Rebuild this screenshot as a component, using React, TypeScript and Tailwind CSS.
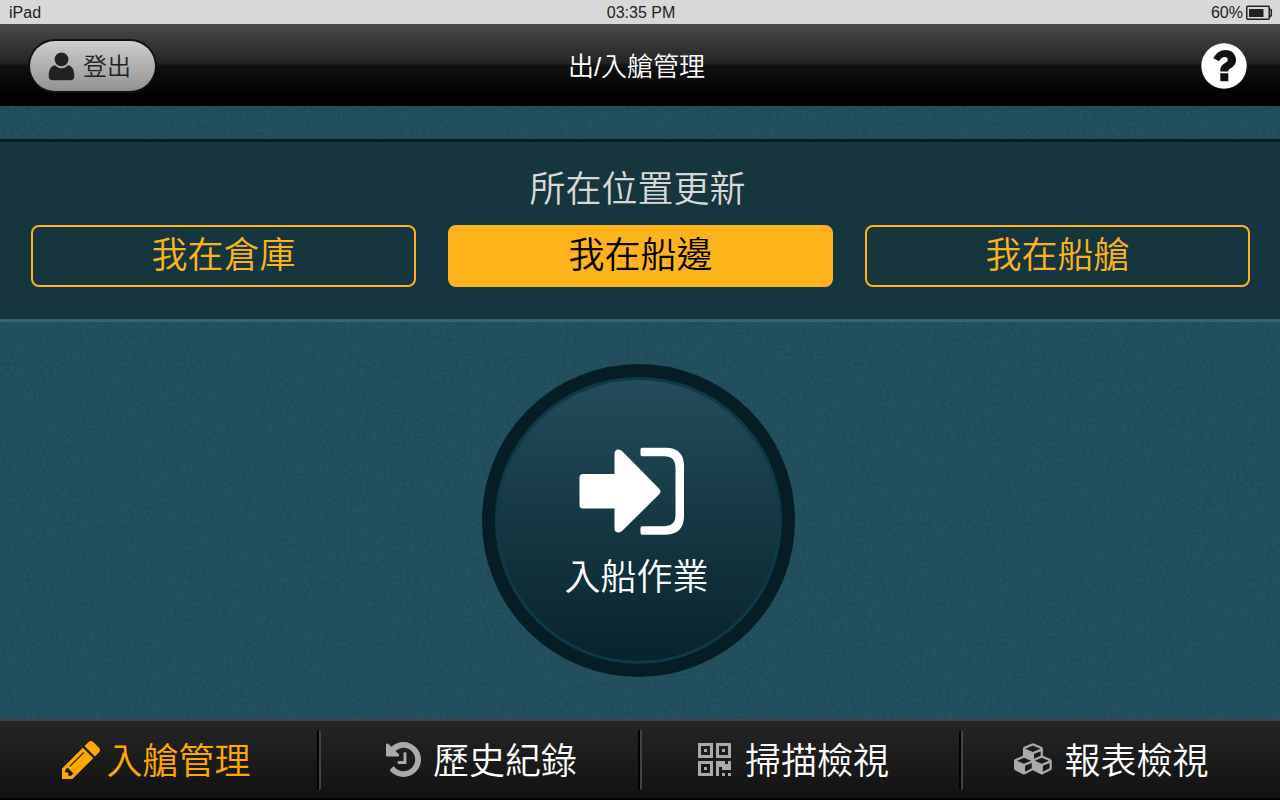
import type { ReactNode } from "react";

const icon = {
  pencil:
    "M363 1536l91-91-235-235-91 91v107h128v128h107zm523-928q0-22-22-22-10 0-17 7l-542 542q-7 7-7 17 0 22 22 22 10 0 17-7l542-542q7-7 7-17zm-54-192l416 416-832 832h-416v-416zm683 96q0 53-37 90l-166 166-416-416 166-165q36-38 90-38 53 0 91 38l235 234q37 39 37 91z",
  history:
    "M1664 896q0 156-61 298t-164 245-245 164-298 61q-172 0-327-72.5t-264-204.5q-7-10-6.5-22.5t8.5-20.5l137-138q10-9 25-9 16 2 23 12 73 95 179 147t225 52q104 0 198.5-40.5t163.5-109.5 109.5-163.5 40.5-198.5-40.5-198.5-109.5-163.5-163.5-109.5-198.5-40.5q-98 0-188 35.5t-160 101.5l137 138q31 30 14 69-17 40-59 40h-448q-26 0-45-19t-19-45v-448q0-42 40-59 39-17 69 14l130 129q107-101 244.5-156.5t284.5-55.5q156 0 298 61t245 164 164 245 61 298zm-640-288v448q0 14-9 23t-23 9h-320q-14 0-23-9t-9-23v-64q0-14 9-23t23-9h224v-352q0-14 9-23t23-9h64q14 0 23 9t9 23z",
  qrcode:
    "M576 1152v128h-128v-128h128zm0-768v128h-128v-128h128zm768 0v128h-128v-128h128zm-1024 1023h384v-383h-384v383zm0-767h384v-384h-384v384zm768 0h384v-384h-384v384zm-256 256v640h-640v-640h640zm512 512v128h-128v-128h128zm256 0v128h-128v-128h128zm0-512v384h-384v-128h-128v384h-128v-640h384v128h128v-128h128zm-768-768v640h-640v-640h640zm768 0v640h-640v-640h640z",
  cubes:
    "M640 1632l384-192v-314l-384 164v342zm-64-454l404-173-404-173-404 173zm1088 454l384-192v-314l-384 164v342zm-64-454l404-173-404-173-404 173zm-448-293l384-165v-266l-384 164v267zm-64-379l441-189-441-189-441 189zm1088 518v416q0 36-19 67t-52 47l-448 224q-25 14-57 14t-57-14l-448-224q-4-2-7-4-2 2-7 4l-448 224q-25 14-57 14t-57-14l-448-224q-33-16-52-47t-19-67v-416q0-38 21.5-70t56.5-48l434-186v-400q0-38 21.5-70t56.5-48l448-192q23-10 50-10t50 10l448 192q35 16 56.5 48t21.5 70v400l434 186q36 16 57 48t21 70z",
};

function StatusBar() {
  return (
    <div className="grid h-6 shrink-0 grid-cols-3 items-center bg-[#d8d8d8] pt-0.5 pr-[7px] pl-[9px] font-['Liberation_Sans',sans-serif] text-base leading-5 text-[#222]">
      <span>iPad</span>
      <span className="text-center">03:35 PM</span>
      <span className="flex items-center justify-end gap-0.5">
        60%
        <svg className="h-4 w-7" viewBox="0 0 28 16" aria-label="電池" role="img">
          <rect x="1.750" y="1.250" width="22.500" height="13" rx="1" fill="none" stroke="#222" strokeWidth="1.500" />
          <rect x="4" y="4" width="14.500" height="8" fill="#222" />
          <path d="M24 3.500L26.300 5.200V10.600L24 12.300" fill="none" stroke="#222" strokeWidth="1.500" />
        </svg>
      </span>
    </div>
  );
}

function Header() {
  return (
    <header className="flex h-[82px] shrink-0 items-center justify-between bg-[linear-gradient(#4a4a4a_0%,#242424_47%,#111_51%,#000_88%)] pt-0.5 pr-[33px] pl-[30px]">
      <button
        type="button"
        className="flex h-[50px] w-[125px] items-center justify-center gap-2 rounded-full bg-linear-to-b from-[#cdcdcd] to-[#939393] pr-1.5 text-2xl text-[#222] shadow-[0_0_0_2px_#111]"
      >
        <svg className="h-[30px] w-[27px]" viewBox="0 0 27 30" fill="#222" aria-hidden="true">
          <circle cx="13.500" cy="8.300" r="6.900" />
          <path d="M6.800 14.200Q13.500 20.500 20.200 14.200C24.500 14.800 26.300 19.500 26.300 25.200Q26.300 29.300 22.200 29.300H4.800Q.7 29.300.7 25.200C.7 19.500 2.500 14.800 6.800 14.200Z" />
        </svg>
        <span className="pt-0.5">登出</span>
      </button>
      <h1 className="pt-0.5 pr-1 text-[26px] leading-9 text-white">出/入艙管理</h1>
      <div className="flex w-[125px] justify-end">
        <button type="button" aria-label="說明" className="rounded-full">
          <svg className="size-[46px]" viewBox="0 0 46 46" aria-hidden="true">
            <circle cx="23" cy="23" r="22.700" fill="#fff" />
            <path
              fill="#111"
              d="M12.300 15.300C15.400 9.800 19.400 7 24.500 7C30.500 7 35 11 35 17C35 21 32.500 23.500 30 25C28 26.200 27.300 27 27.300 28.500H19.300C19.100 24.500 20.300 22.300 23.300 20.500C25.800 19 26.800 18.300 26.800 16.800C26.800 15 25.600 14 23.600 14C21.300 14 19.800 15.500 18 18.300ZM19.300 30.300H27.300V38.300H19.300Z"
            />
          </svg>
        </button>
      </div>
    </header>
  );
}

function LocationButton({ children, active = false }: { children: ReactNode; active?: boolean }) {
  return (
    <button
      type="button"
      aria-pressed={active}
      className={
        "h-[62px] rounded-lg border-2 border-[#ffb31b] text-4xl " +
        (active ? "bg-[#ffb31b] text-black" : "text-[#ffb31b]")
      }
    >
      {children}
    </button>
  );
}

function Texture() {
  return (
    <svg className="absolute inset-0 size-full" aria-hidden="true">
      <filter id="grain" x="0" y="0" width="100%" height="100%" colorInterpolationFilters="sRGB">
        <feTurbulence type="fractalNoise" baseFrequency="0.3" numOctaves="2" seed="4" />
        <feColorMatrix values="0.030 0 0 0 0.117  0.060 0 0 0 0.279  0.060 0 0 0 0.341  0 0 0 0 1" />
      </filter>
      <rect width="100%" height="100%" filter="url(#grain)" />
    </svg>
  );
}

function Tab({
  href,
  label,
  path,
  viewBox,
  iconClass,
  className,
  active = false,
}: {
  href: string;
  label: string;
  path: string;
  viewBox: string;
  iconClass: string;
  className: string;
  active?: boolean;
}) {
  return (
    <a
      href={href}
      aria-current={active ? "page" : undefined}
      className={
        "flex h-full flex-1 items-center justify-center text-4xl " + (active ? "text-[#ffa800]" : "text-white")
      }
    >
      <span className={"flex items-center " + className}>
        <svg
          className={iconClass + (active ? " fill-[#ffa800]" : " fill-[#aaa]")}
          viewBox={viewBox}
          aria-hidden="true"
        >
          <path d={path} />
        </svg>
        <span className="pt-1">{label}</span>
      </span>
    </a>
  );
}

function Divider() {
  return <span className="h-[60px] w-1 shrink-0 rounded-sm border-l-2 border-black bg-[#444]" />;
}

export default function App() {
  return (
    <div className="flex min-h-screen flex-col bg-black font-['Liberation_Sans','Noto_Sans_CJK_TC',sans-serif] font-[350]">
      <StatusBar />
      <Header />
      <main className="relative flex flex-1 flex-col bg-[#214f5f]">
        <Texture />
        <section className="relative mt-[33px] border-y-[3px] border-t-[#051e26] border-b-[#2f687a] bg-[#15353f] pt-6 pr-[30px] pb-8 pl-[31px]">
          <h2 className="pr-1.5 text-center text-4xl leading-[48px] text-[#d8d8d8]">所在位置更新</h2>
          <div className="mt-[11px] grid grid-cols-3 gap-8">
            <LocationButton>我在倉庫</LocationButton>
            <LocationButton active>我在船邊</LocationButton>
            <LocationButton>我在船艙</LocationButton>
          </div>
        </section>
        <div className="relative flex flex-1 items-center justify-center pr-[3px]">
          <button
            type="button"
            className="flex size-[313px] flex-col items-center rounded-full border-[13px] border-[#051e26] bg-linear-to-b from-[#244f5f] to-[#06222a] bg-origin-border pt-[69px] text-4xl text-white shadow-[inset_0_0_0_3px_#0d3a4a]"
          >
            <svg className="mr-3.5 h-[90px] w-[108px]" viewBox="0 0 108 90" aria-hidden="true">
              <path
                fill="#fff"
                d="M5 28H36.500V8Q36.500 3.500 40.500 3.500Q42.500 3.500 44.500 5.500L81 42.500Q84 45.500 81 48.500L44.500 84.500Q42.500 86.500 40.500 86.500Q36.500 86.500 36.500 82V62.500H5Q1.500 62.500 1.500 59V31.500Q1.500 28 5 28Z"
              />
              <path
                fill="#fff"
                d="M64 1.700H88Q106 2 106 20V70Q106 88 88 88.700H64Q62.500 88.700 62.500 87V82Q62.500 80.200 64 80.200H87Q97.500 80 97.500 69.500V21Q97.500 10.500 87 10.200H64Q62.500 10.200 62.500 8.500V3.500Q62.500 1.700 64 1.700Z"
              />
            </svg>
            <span className="mt-[18px] pr-1 leading-[48px]">入船作業</span>
          </button>
        </div>
      </main>
      <nav className="flex h-[81px] shrink-0 items-center border-t-2 border-b-2 border-t-[#444] border-b-black bg-linear-to-b from-[#252525] to-[#121212]">
        <Tab
          href="#load"
          label="入艙管理"
          path={icon.pencil}
          viewBox="0 149 1515 1515"
          iconClass="size-[38px]"
          className="gap-1.5 pr-1"
          active
        />
        <Divider />
        <Tab
          href="#history"
          label="歷史紀錄"
          path={icon.history}
          viewBox="128 128 1536 1536"
          iconClass="size-[35px]"
          className="gap-3 pl-1"
        />
        <Divider />
        <Tab
          href="#scan"
          label="掃描檢視"
          path={icon.qrcode}
          viewBox="192 128 1408 1408"
          iconClass="size-[33px]"
          className="gap-3.5 pr-3.5"
        />
        <Divider />
        <Tab
          href="#report"
          label="報表檢視"
          path={icon.cubes}
          viewBox="0 64 2304 1792"
          iconClass="h-[34px] w-[40px]"
          className="gap-2.5 pr-5"
        />
      </nav>
    </div>
  );
}
